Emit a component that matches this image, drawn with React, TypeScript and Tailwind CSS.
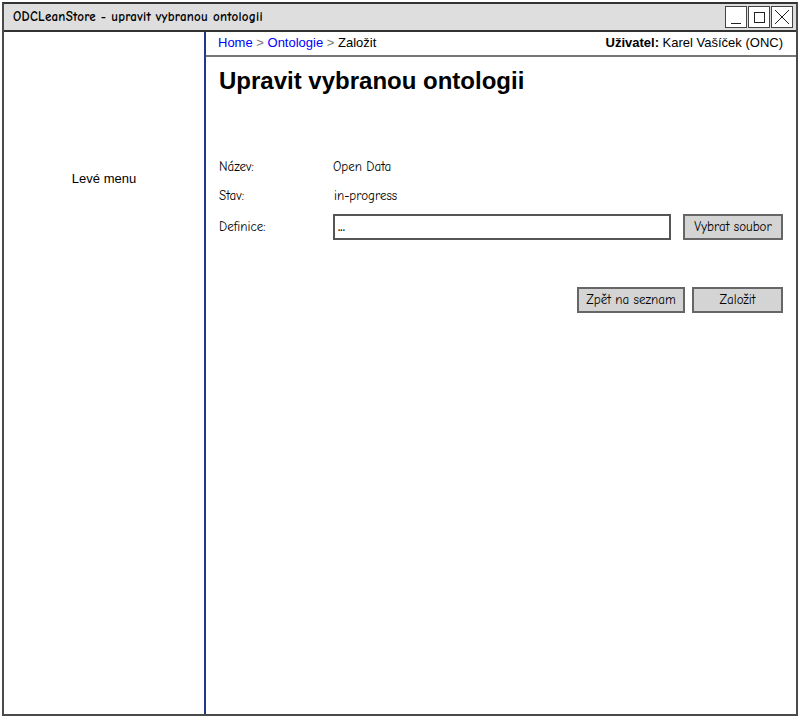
const sketch = { fontFamily: '"Comic Neue", "DejaVu Sans", sans-serif' };
const arial = { fontFamily: '"Liberation Sans", Arial, sans-serif' };

function WinButton({ children }: { children: React.ReactNode }) {
  return (
    <div className="w-[22px] h-[22px] border border-[#444] bg-white flex items-center justify-center">
      {children}
    </div>
  );
}

function SketchButton({ title, className }: { title: string; className: string }) {
  return (
    <button
      className={`h-[26px] border-2 border-[#666] bg-[#d4d4d4] text-[13px] text-black ${className}`}
      style={sketch}
    >
      {title}
    </button>
  );
}

export default function App() {
  return (
    <div className="w-[800px] h-[718px] bg-white p-[2px]" style={arial}>
      <div className="w-full h-full flex flex-col border-2 border-[#4a4a4a] border-t-[#333]">
        {/* title bar */}
        <div className="h-[28px] flex items-center justify-between bg-[#dedede] border-b-2 border-[#333] pl-[9px] pr-[3px]">
          <span className="text-[13px] font-bold tracking-[0.25px] text-black" style={sketch}>
            ODCLeanStore - upravit vybranou ontologii
          </span>
          <div className="flex gap-[1px]">
            <WinButton>
              <div className="w-[10px] h-[1px] bg-[#222] mt-[12px]" />
            </WinButton>
            <WinButton>
              <div className="w-[11px] h-[11px] border border-[#222]" />
            </WinButton>
            <WinButton>
              <svg width="16" height="16" viewBox="0 0 16 16">
                <path d="M1 1 L15 15 M15 1 L1 15" stroke="#222" strokeWidth="1" />
              </svg>
            </WinButton>
          </div>
        </div>

        <div className="flex flex-1 min-h-0">
          {/* left menu */}
          <div className="w-[202px] flex justify-center pt-[137px] border-r-2 border-[#23388c]">
            <span className="text-[13px] text-black">Levé menu</span>
          </div>

          {/* content */}
          <div className="flex-1 flex flex-col">
            <div className="h-[25px] flex items-center justify-between pl-[12px] pr-[13px] border-b-2 border-[#777] text-[13px]">
              <div className="-mt-[2px]">
                <span className="text-[#0000ff]">Home</span>
                <span className="text-[#777]"> &gt; </span>
                <span className="text-[#0000ff]">Ontologie</span>
                <span className="text-[#777]"> &gt; </span>
                <span className="text-black">Založit</span>
              </div>
              <div className="text-black -mt-[2px]">
                <span className="font-bold">Uživatel:</span> Karel Vašíček (ONC)
              </div>
            </div>

            <div className="pl-[13px] pr-[13px]">
              <h1 className="text-[24px] font-bold text-black mt-[9px] leading-[30px]">
                Upravit vybranou ontologii
              </h1>

              <div className="mt-[62px] flex flex-col text-[13px] text-black" style={sketch}>
                <div className="flex items-center h-[18px]">
                  <span className="w-[114px]">Název:</span>
                  <span>Open Data</span>
                </div>
                <div className="flex items-center h-[18px] mt-[11px]">
                  <span className="w-[115px]">Stav:</span>
                  <span>in-progress</span>
                </div>
                <div className="flex items-center mt-[9px] gap-[12px]">
                  <span className="w-[102px]">Definice:</span>
                  <div className="flex-1 h-[26px] border-2 border-[#555] bg-white flex items-center px-[3px] font-bold">
                    ...
                  </div>
                  <SketchButton title="Vybrat soubor" className="w-[100px]" />
                </div>
              </div>

              <div className="flex justify-end gap-[7px] mt-[47px]">
                <SketchButton title="Zpět na seznam" className="w-[108px]" />
                <SketchButton title="Založit" className="w-[91px]" />
              </div>
            </div>
          </div>
        </div>
      </div>
    </div>
  );
}
